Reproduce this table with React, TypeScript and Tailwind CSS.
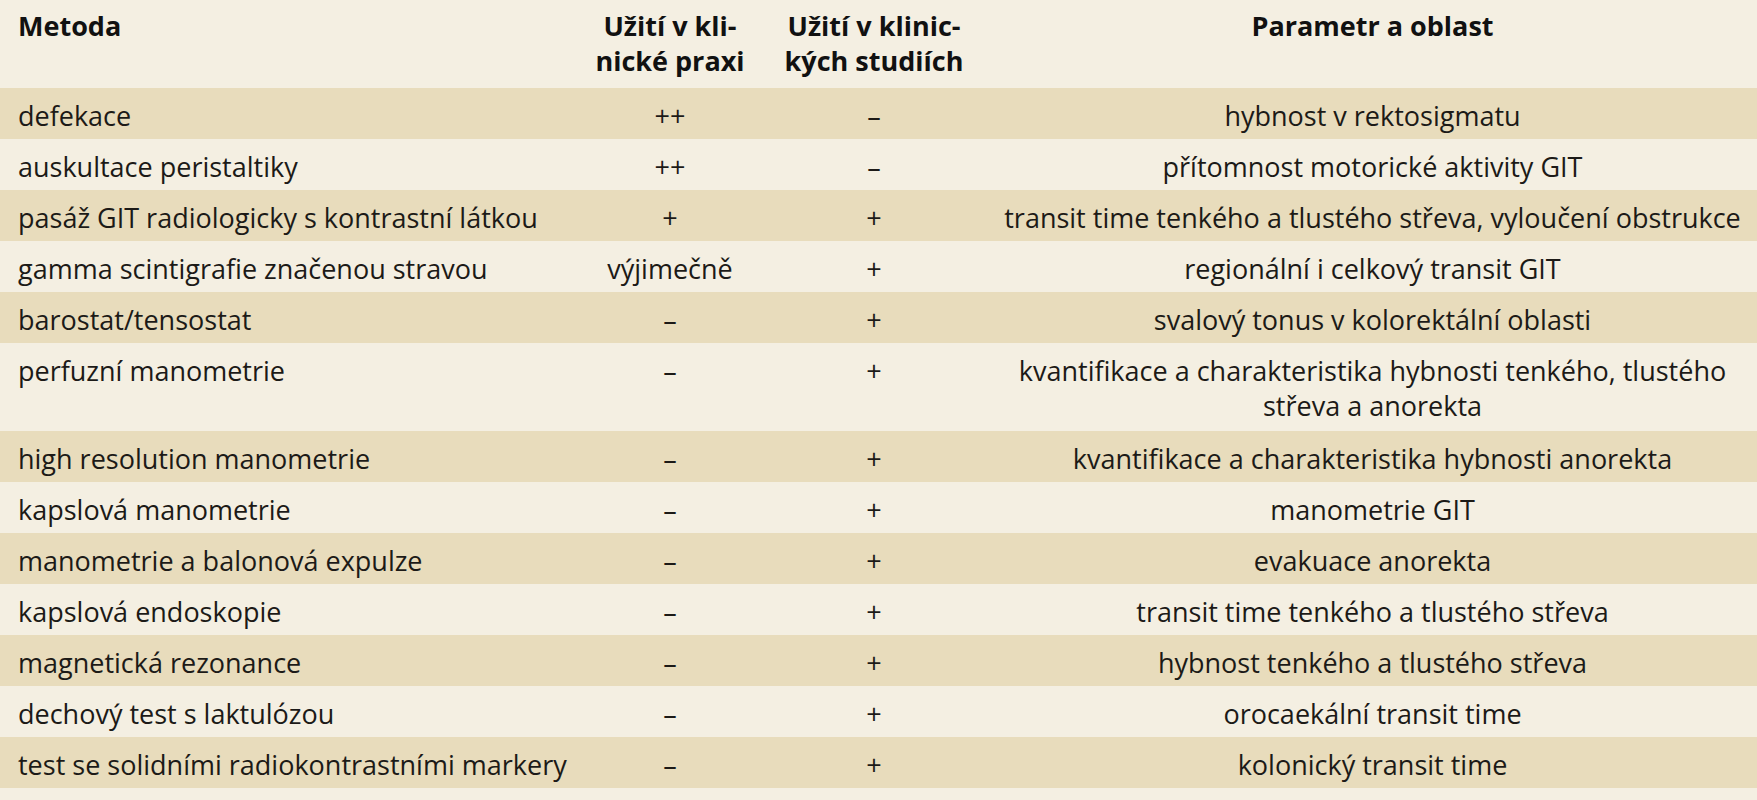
const rows: { method: string; praxe: string; studie: string; param: React.ReactNode; tall?: boolean }[] = [
  { method: 'defekace', praxe: '++', studie: '–', param: 'hybnost v rektosigmatu' },
  { method: 'auskultace peristaltiky', praxe: '++', studie: '–', param: 'přítomnost motorické aktivity GIT' },
  { method: 'pasáž GIT radiologicky s kontrastní látkou', praxe: '+', studie: '+', param: 'transit time tenkého a tlustého střeva, vyloučení obstrukce' },
  { method: 'gamma scintigrafie značenou stravou', praxe: 'výjimečně', studie: '+', param: 'regionální i celkový transit GIT' },
  { method: 'barostat/tensostat', praxe: '–', studie: '+', param: 'svalový tonus v kolorektální oblasti' },
  {
    method: 'perfuzní manometrie',
    praxe: '–',
    studie: '+',
    tall: true,
    param: (
      <>
        kvantifikace a charakteristika hybnosti tenkého, tlustého
        <br />
        střeva a anorekta
      </>
    ),
  },
  { method: 'high resolution manometrie', praxe: '–', studie: '+', param: 'kvantifikace a charakteristika hybnosti anorekta' },
  { method: 'kapslová manometrie', praxe: '–', studie: '+', param: 'manometrie GIT' },
  { method: 'manometrie a balonová expulze', praxe: '–', studie: '+', param: 'evakuace anorekta' },
  { method: 'kapslová endoskopie', praxe: '–', studie: '+', param: 'transit time tenkého a tlustého střeva' },
  { method: 'magnetická rezonance', praxe: '–', studie: '+', param: 'hybnost tenkého a tlustého střeva' },
  { method: 'dechový test s laktulózou', praxe: '–', studie: '+', param: 'orocaekální transit time' },
  { method: 'test se solidními radiokontrastními markery', praxe: '–', studie: '+', param: 'kolonický transit time' },
];

export default function App() {
  return (
    <div
      className="min-h-screen w-full bg-[#f4efe2] text-[#1c1a17]"
      style={{ fontFamily: '"Open Sans", Lato, sans-serif' }}
    >
      <table className="w-full table-fixed border-collapse text-[27px] leading-[35px]">
        <colgroup>
          <col className="w-[580px]" />
          <col className="w-[180px]" />
          <col className="w-[228px]" />
          <col />
        </colgroup>
        <thead>
          <tr className="bg-[#f4efe2] align-top text-[#111]">
            <th className="pl-[18px] pr-2 pt-[8px] pb-[10px] text-left font-bold">Metoda</th>
            <th className="px-1 pt-[8px] pb-[10px] text-center font-bold">
              Užití v kli-
              <br />
              nické praxi
            </th>
            <th className="px-1 pt-[8px] pb-[10px] text-center font-bold">
              Užití v klinic-
              <br />
              kých studiích
            </th>
            <th className="px-3 pt-[8px] pb-[10px] text-center font-bold">Parametr a oblast</th>
          </tr>
        </thead>
        <tbody>
          {rows.map((r, i) => {
            const pad = r.tall ? 'pt-[10px] pb-[8px]' : 'pt-[10px] pb-[6px]';
            return (
              <tr key={i} className={`align-top ${i % 2 === 0 ? 'bg-[#e8dcbc]' : 'bg-[#f4efe2]'}`}>
                <td className={`pl-[18px] pr-2 whitespace-nowrap ${pad}`}>{r.method}</td>
                <td className={`px-1 text-center whitespace-nowrap ${pad}`}>{r.praxe}</td>
                <td className={`px-1 text-center whitespace-nowrap ${pad}`}>{r.studie}</td>
                <td className={`px-2 text-center whitespace-nowrap ${pad}`}>{r.param}</td>
              </tr>
            );
          })}
        </tbody>
      </table>
    </div>
  );
}
